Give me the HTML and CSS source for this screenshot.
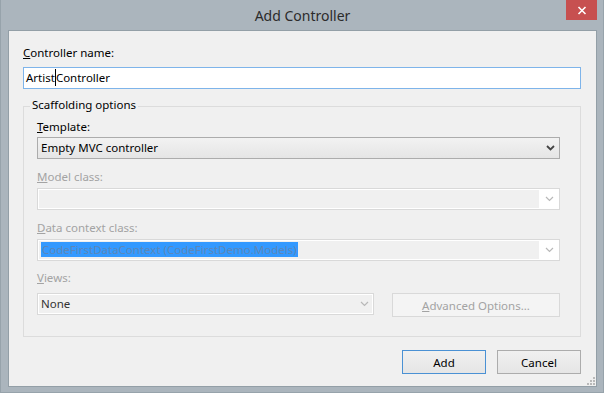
FILE: index.html
```html
<!DOCTYPE html>
<html lang="en">

<head>
    <meta charset="UTF-8" />
    <title>Add Controller</title>
    <link rel="stylesheet" href="styles.css">
</head>

<body>
    <div class="window">
        <div class="titlebar">
            <span></span>
            <div class="title">Add Controller</div>
            <button class="close" type="button" aria-label="Close">
                <svg width="10" height="9" viewBox="0 0 10 9">
                    <path d="M1.5 1 L8.5 8 M8.5 1 L1.5 8" stroke="#fff" stroke-width="1.6" fill="none" />
                </svg>
            </button>
        </div>

        <div class="content">
            <label class="field-label" for="name"><u>C</u>ontroller name:</label>
            <div class="textbox" id="name">Artist<span class="caret"></span>Controller</div>

            <fieldset class="group">
                <legend>Scaffolding options</legend>

                <label class="field-label"><u>T</u>emplate:</label>
                <div class="combo">
                    <span class="combo-text">Empty MVC controller</span>
                    <span class="combo-arrow">
                        <svg width="9" height="6" viewBox="0 0 9 6">
                            <path d="M1 1 L4.5 4.5 L8 1" stroke="#444" stroke-width="1.8" fill="none" />
                        </svg>
                    </span>
                </div>

                <label class="field-label disabled row-gap"><u>M</u>odel class:</label>
                <div class="combo combo-disabled">
                    <span class="combo-text"></span>
                    <span class="combo-arrow white">
                        <svg width="9" height="6" viewBox="0 0 9 6">
                            <path d="M1 1 L4.5 4.5 L8 1" stroke="#b8b8b8" stroke-width="1.2" fill="none" />
                        </svg>
                    </span>
                </div>

                <label class="field-label disabled row-gap"><u>D</u>ata context class:</label>
                <div class="combo combo-disabled">
                    <span class="combo-text"><span class="selected">CodeFirstDataContext (CodeFirstDemo.Models)</span></span>
                    <span class="combo-arrow white">
                        <svg width="9" height="6" viewBox="0 0 9 6">
                            <path d="M1 1 L4.5 4.5 L8 1" stroke="#b8b8b8" stroke-width="1.2" fill="none" />
                        </svg>
                    </span>
                </div>

                <label class="field-label disabled views-label"><u>V</u>iews:</label>
                <div class="views-row">
                    <div class="combo combo-disabled views">
                        <span class="combo-text dark">None</span>
                        <span class="combo-arrow">
                            <svg width="9" height="6" viewBox="0 0 9 6">
                                <path d="M1 1 L4.5 4.5 L8 1" stroke="#b8b8b8" stroke-width="1.2" fill="none" />
                            </svg>
                        </span>
                    </div>
                    <button class="adv" type="button" disabled><u>A</u>dvanced Options...</button>
                </div>
            </fieldset>

            <div class="buttons">
                <button class="btn btn-default" type="button">Add</button>
                <button class="btn" type="button">Cancel</button>
            </div>

            <svg class="grip" width="8" height="8" viewBox="0 0 8 8">
                <rect x="6" y="0" width="2" height="2" fill="#b9b9b9" />
                <rect x="3" y="3" width="2" height="2" fill="#b9b9b9" />
                <rect x="6" y="3" width="2" height="2" fill="#b9b9b9" />
                <rect x="0" y="6" width="2" height="2" fill="#b9b9b9" />
                <rect x="3" y="6" width="2" height="2" fill="#b9b9b9" />
                <rect x="6" y="6" width="2" height="2" fill="#b9b9b9" />
            </svg>
        </div>
    </div>
</body>

</html>
```

FILE: styles.css
```css
* {
    box-sizing: border-box;
}

body {
    margin: 0;
    font-family: "Noto Sans", "Open Sans", sans-serif;
    font-size: 11.5px;
}

.window {
    width: 604px;
    height: 393px;
    display: flex;
    flex-direction: column;
    padding: 0 7px 8px 7px;
    background-color: #abb5bd;
    border: 1px solid #97a3ab;
    border-top: none;
}

.titlebar {
    height: 30px;
    display: grid;
    grid-template-columns: 1fr auto 1fr;
    margin-right: -1px;
}

.title {
    font-size: 14px;
    line-height: 30px;
    color: #2b2b2b;
    padding-top: 1px;
}

.close {
    justify-self: end;
    align-self: start;
    width: 31px;
    height: 20px;
    border: none;
    padding: 0;
    background-color: #c75050;
    display: flex;
    align-items: center;
    justify-content: center;
}

.content {
    flex: 1;
    position: relative;
    display: flex;
    flex-direction: column;
    background-color: #f0f0f0;
    border: 1px solid #939fa7;
    margin-right: -1px;
    padding: 14px 15px 12px 14px;
}

.field-label {
    display: block;
    line-height: 16px;
    color: #000;
}

.field-label.disabled {
    color: #a3a3a3;
}

.row-gap {
    margin-top: 10px;
}

.views-label {
    margin-top: 9px;
}

.textbox {
    margin-top: 6px;
    height: 22px;
    border: 1px solid #7eb4ea;
    background-color: #fff;
    padding: 0 2px;
    line-height: 20px;
    white-space: nowrap;
}

.caret {
    display: inline-block;
    width: 0;
    height: 17px;
    border-left: 1px solid #000;
    vertical-align: -4px;
}

.group {
    margin: 8px 0 0 0;
    border: 1px solid #dcdcdc;
    padding: 4px 20px 19px 13px;
}

.group legend {
    margin-left: -7px;
    padding: 0 2px 2px 2px;
    line-height: 16px;
    color: #000;
}

.combo {
    margin-top: 2px;
    height: 22px;
    display: flex;
    border: 1px solid #acacac;
    background: linear-gradient(#f2f2f2, #e5e5e5);
}

.combo-disabled {
    margin-top: 3px;
    border-color: #d9d9d9;
    background: #f0f0f0;
    box-shadow: inset 0 0 0 1px #fff;
}

.combo-text {
    flex: 1;
    line-height: 20px;
    padding-left: 3px;
    white-space: nowrap;
    overflow: hidden;
}

.combo-text.dark {
    color: #333;
}

.selected {
    display: inline-block;
    line-height: 15px;
    padding: 0 1px;
    background-color: #3399ff;
    color: #5c87b8;
}

.combo-arrow {
    width: 19px;
    display: flex;
    align-items: center;
    justify-content: center;
    padding-left: 1px;
}

.combo-arrow.white {
    background-color: #fff;
    margin: 1px 1px 1px 0;
}

.views-row {
    margin-top: 7px;
    display: flex;
    align-items: flex-start;
}

.views {
    margin-top: 0;
    width: 337px;
}

.adv {
    margin-left: auto;
    width: 168px;
    height: 24px;
    font-family: inherit;
    font-size: 11.5px;
    color: #a3a3a3;
    background-color: #f4f4f4;
    border: 1px solid #d9d9d9;
    padding: 0;
}

.buttons {
    margin-top: 13px;
    display: flex;
    justify-content: flex-end;
    gap: 11px;
}

.btn {
    width: 84px;
    height: 24px;
    font-family: inherit;
    font-size: 11.5px;
    color: #000;
    background: linear-gradient(#f0f0f0, #e5e5e5);
    border: 1px solid #acacac;
    padding: 0;
}

.btn-default {
    border-color: #4a91d4;
}

.grip {
    position: absolute;
    right: 1px;
    bottom: 1px;
}
```
